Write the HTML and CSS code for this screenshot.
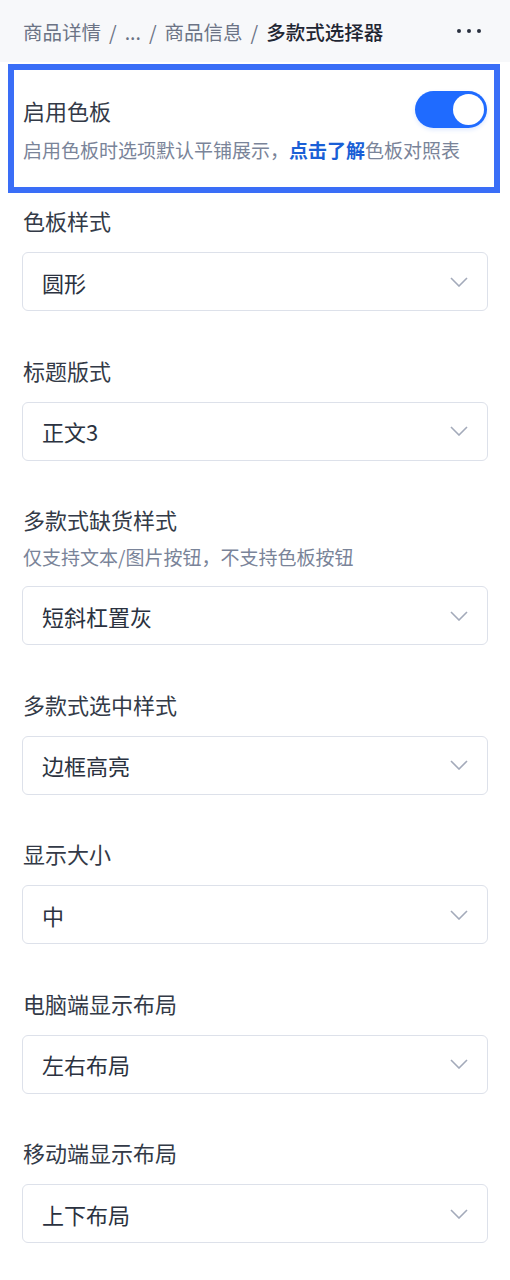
FILE: index.html
```html
<!DOCTYPE html>
<html lang="zh-CN">
<head>
    <meta charset="UTF-8">
    <meta name="viewport" content="width=device-width, initial-scale=1.0">
    <title>多款式选择器</title>
    <link rel="stylesheet" href="styles.css">
</head>

<body>
    <div class="topbar">
        <div class="crumbs">
            <span>商品详情</span><span class="sep">/</span>
            <span>...</span><span class="sep">/</span>
            <span>商品信息</span><span class="sep">/</span>
            <span class="cur">多款式选择器</span>
        </div>
        <div class="more"><i></i><i></i><i></i></div>
    </div>

    <div class="hl">
        <div class="sw-row">
            <div class="sw-label">启用色板</div>
            <div class="switch on"><span class="knob"></span></div>
        </div>
        <div class="tip">启用色板时选项默认平铺展示，<a href="#">点击了解</a>色板对照表</div>
    </div>

    <div class="fields">
        <div class="field">
            <div class="lbl">色板样式</div>
            <div class="sel"><span>圆形</span><svg width="18" height="10" viewBox="0 0 18 10"><path d="M1 1l8 8 8-8" /></svg></div>
        </div>
        <div class="field">
            <div class="lbl">标题版式</div>
            <div class="sel"><span>正文3</span><svg width="18" height="10" viewBox="0 0 18 10"><path d="M1 1l8 8 8-8" /></svg></div>
        </div>
        <div class="field">
            <div class="lbl">多款式缺货样式</div>
            <div class="desc">仅支持文本/图片按钮，不支持色板按钮</div>
            <div class="sel"><span>短斜杠置灰</span><svg width="18" height="10" viewBox="0 0 18 10"><path d="M1 1l8 8 8-8" /></svg></div>
        </div>
        <div class="field">
            <div class="lbl">多款式选中样式</div>
            <div class="sel"><span>边框高亮</span><svg width="18" height="10" viewBox="0 0 18 10"><path d="M1 1l8 8 8-8" /></svg></div>
        </div>
        <div class="field">
            <div class="lbl">显示大小</div>
            <div class="sel"><span>中</span><svg width="18" height="10" viewBox="0 0 18 10"><path d="M1 1l8 8 8-8" /></svg></div>
        </div>
        <div class="field">
            <div class="lbl">电脑端显示布局</div>
            <div class="sel"><span>左右布局</span><svg width="18" height="10" viewBox="0 0 18 10"><path d="M1 1l8 8 8-8" /></svg></div>
        </div>
        <div class="field">
            <div class="lbl">移动端显示布局</div>
            <div class="sel"><span>上下布局</span><svg width="18" height="10" viewBox="0 0 18 10"><path d="M1 1l8 8 8-8" /></svg></div>
        </div>
    </div>
</body>
</html>
```

FILE: styles.css
```css
body {
    margin: 0;
    background: #ffffff;
    font-family: "Noto Sans CJK SC", "Noto Sans", sans-serif;
    color: #333a47;
}
.topbar {
    height: 62px;
    background: #f7f8fa;
    display: flex;
    align-items: center;
    justify-content: space-between;
    padding: 0 23px;
}
.crumbs {
    font-size: 19.5px;
    color: #6b7385;
    display: flex;
    align-items: center;
    white-space: nowrap;
}
.crumbs .sep {
    margin: 0 8px;
}
.crumbs .cur {
    color: #1f2633;
    font-weight: 500;
}
.more {
    display: flex;
    gap: 6px;
    margin-right: 6px;
}
.more i {
    width: 4px;
    height: 4px;
    border-radius: 50%;
    background: #2b3240;
}
.hl {
    margin: 2px 10px 0 8px;
    border: 6px solid #3a6ef7;
    padding: 21px 7px 23px 9px;
}
.sw-row {
    display: flex;
    justify-content: space-between;
    align-items: flex-start;
}
.sw-label {
    font-size: 22px;
    line-height: 26px;
    margin-top: 6px;
}
.switch {
    width: 72px;
    height: 37px;
    border-radius: 19px;
    background: #1f6bff;
    position: relative;
    box-shadow: 0 2px 4px rgba(31, 107, 255, 0.15);
}
.switch .knob {
    position: absolute;
    right: 3px;
    top: 3px;
    width: 31px;
    height: 31px;
    border-radius: 50%;
    background: #ffffff;
}
.tip {
    margin-top: 8px;
    font-size: 19px;
    line-height: 28px;
    color: #7a8499;
    white-space: nowrap;
}
.tip a {
    color: #1a5fd6;
    font-weight: 600;
    text-decoration: none;
}
.fields {
    padding: 14px 22px 0 22px;
}
.field {
    margin-bottom: 45.5px;
}
.lbl {
    font-size: 22px;
    line-height: 26px;
    padding-left: 1px;
}
.desc {
    margin-top: 11px;
    font-size: 19px;
    line-height: 28px;
    color: #7a8499;
    padding-left: 1px;
}
.sel {
    margin-top: 19px;
    height: 59px;
    box-sizing: border-box;
    border: 1px solid #dde1ea;
    border-radius: 6px;
    display: flex;
    align-items: center;
    justify-content: space-between;
    padding: 0 19px 0 19px;
    font-size: 22px;
    color: #2b3240;
}
.desc + .sel {
    margin-top: 15px;
}
.sel svg {
    fill: none;
    stroke: #a3aaba;
    stroke-width: 1.6;
}
```
